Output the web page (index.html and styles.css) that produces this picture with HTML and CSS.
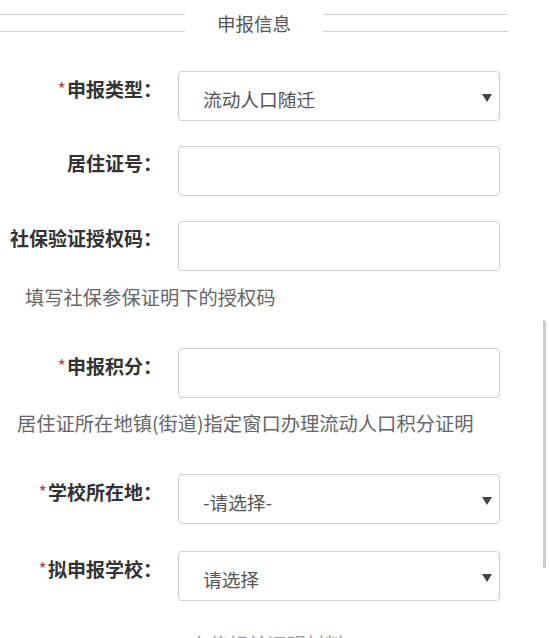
FILE: index.html
```html
<!DOCTYPE html>
<html>
<head>
    <meta charset="utf-8">
    <title>申报信息</title>
    <link rel="stylesheet" href="styles.css">
</head>
<body>
    <div class="form">
        <div class="legend">
            <span class="line"></span>
            <span class="title">申报信息</span>
            <span class="line"></span>
        </div>

        <div class="row">
            <label class="label"><span class="req">*</span>申报类型：</label>
            <div class="field select">
                <span>流动人口随迁</span>
                <svg class="arrow" width="10" height="8" viewBox="0 0 10 8"><path d="M0 0H10L5 8Z" fill="#444"/></svg>
            </div>
        </div>

        <div class="row">
            <label class="label">居住证号：</label>
            <div class="field"></div>
        </div>

        <div class="row">
            <label class="label">社保验证授权码：</label>
            <div class="field"></div>
        </div>
        <p class="hint hint-code">填写社保参保证明下的授权码</p>

        <div class="row">
            <label class="label"><span class="req">*</span>申报积分：</label>
            <div class="field"></div>
        </div>
        <p class="hint hint-points">居住证所在地镇(街道)指定窗口办理流动人口积分证明</p>

        <div class="row row-wide">
            <label class="label"><span class="req">*</span>学校所在地：</label>
            <div class="field select">
                <span>-请选择-</span>
                <svg class="arrow" width="10" height="8" viewBox="0 0 10 8"><path d="M0 0H10L5 8Z" fill="#444"/></svg>
            </div>
        </div>

        <div class="row">
            <label class="label"><span class="req">*</span>拟申报学校：</label>
            <div class="field select">
                <span>请选择</span>
                <svg class="arrow" width="10" height="8" viewBox="0 0 10 8"><path d="M0 0H10L5 8Z" fill="#444"/></svg>
            </div>
        </div>

        <p class="hint hint-bottom">上传相关证明材料</p>
    </div>
    <div class="scrollbar"></div>
</body>
</html>
```

FILE: styles.css
```css
body { margin: 0; font-family: "Noto Sans CJK SC", "Noto Sans", sans-serif; color: #333; background: #fff; overflow: hidden; }
.form { width: 508px; padding-top: 14px; }

.legend { display: flex; align-items: center; height: 18px; margin-bottom: 39px; }
.legend .line { width: 185px; height: 16px; border-top: 1px solid #d0d0d0; border-bottom: 1px solid #d0d0d0; }
.legend .title { flex: 1; text-align: center; font-size: 18.5px; line-height: 20px; color: #555; }

.row { display: flex; margin-bottom: 25px; }
.row-wide { margin-bottom: 27px; }
.label { width: 162px; margin-right: 16px; padding-top: 4px; text-align: right; font-size: 19px; line-height: 26px; font-weight: bold; color: #333; }
.req { color: #b04545; font-weight: normal; font-size: 18px; margin-right: 1px; vertical-align: 1px; }

.field { width: 322px; height: 50px; box-sizing: border-box; border: 1px solid #cfcfcf; border-radius: 4px; display: flex; align-items: center; padding: 4px 7px 0 24px; font-size: 18.7px; color: #555; }
.select .arrow { margin-left: auto; }

.hint { margin: 0; font-size: 19.3px; line-height: 26px; color: #666; }
.hint-code { margin: -12px 0 38px 25px; }
.hint-points { margin: -13px 0 38px 17px; }
.hint-bottom { margin: 30px 0 0 190px; color: #999; }

.scrollbar { position: fixed; left: 543px; top: 320px; width: 3px; height: 248px; background: #cfcfcf; border-radius: 2px; }
```
